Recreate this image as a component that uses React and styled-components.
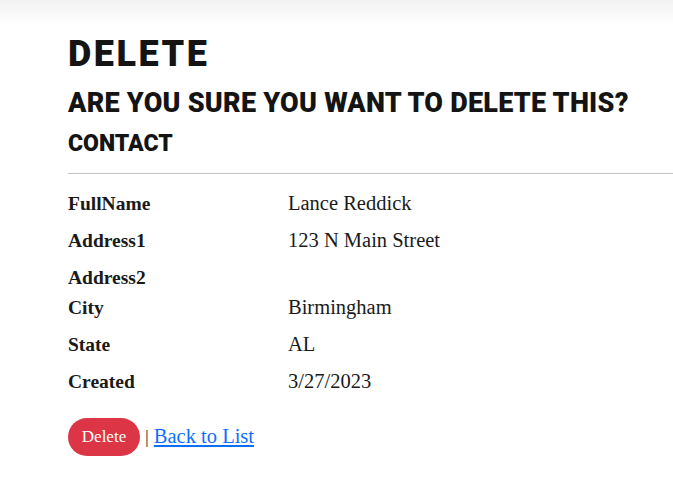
import React from 'react'
import styled, { createGlobalStyle } from 'styled-components'

const GlobalStyle = createGlobalStyle`
  html, body {
    margin: 0;
    padding: 0;
    background: #fff;
  }
  body {
    font-family: "Liberation Serif", "DejaVu Serif", serif;
    color: #212529;
  }
`

const TopShade = styled.div`
  height: 26px;
  background: linear-gradient(#f2f2f2, #ffffff);
`

const Main = styled.main`
  padding: 7px 0 0 68px;
`

const Title = styled.h1`
  margin: 0;
  font-family: Roboto, "DejaVu Sans", sans-serif;
  font-weight: 900;
  font-size: 36px;
  line-height: 43px;
  letter-spacing: 2.5px;
  text-transform: uppercase;
  color: #141414;
`

const Question = styled.h3`
  margin: 11px 0 0;
  font-family: Roboto, "DejaVu Sans", sans-serif;
  font-weight: 900;
  font-size: 27px;
  line-height: 32px;
  letter-spacing: 0.25px;
  text-transform: uppercase;
  color: #141414;
`

const Section = styled.h4`
  margin: 10px 0 0;
  font-family: Roboto, "DejaVu Sans", sans-serif;
  font-weight: 900;
  font-size: 23px;
  line-height: 30px;
  letter-spacing: 0;
  text-transform: uppercase;
  color: #141414;
`

const Rule = styled.hr`
  margin: 14px 0 15px;
  border: 0;
  border-top: 1px solid #c4c4c4;
`

const Details = styled.dl`
  display: grid;
  grid-template-columns: 220px 1fr;
  margin: 0;
  font-size: 20px;
  line-height: 29.5px;
  color: #1a1a1a;
`

const Label = styled.dt`
  font-weight: 700;
  font-size: 19.5px;
`

const Value = styled.dd`
  margin: 0 0 7.5px;
  font-size: 20.5px;
`

const Actions = styled.form`
  display: flex;
  align-items: center;
  margin-top: 14px;
  font-size: 20.5px;
`

const DangerButton = styled.button`
  width: 72px;
  height: 38px;
  border: 0;
  border-radius: 19px;
  background: #dc3545;
  color: #fff;
  font-family: "Liberation Serif", "DejaVu Serif", serif;
  font-size: 17px;
  padding: 0;
  cursor: pointer;
`

const Pipe = styled.span`
  margin: 0 5px 0 5px;
  color: #333;
  font-size: 19px;
`

const BackLink = styled.a`
  color: #0d6efd;
  text-decoration: underline;
  text-underline-offset: 2px;
`

const fields = [
  ['FullName', 'Lance Reddick'],
  ['Address1', '123 N Main Street'],
  ['Address2', ''],
  ['City', 'Birmingham'],
  ['State', 'AL'],
  ['Created', '3/27/2023'],
]

export default function App() {
  return (
    <>
      <GlobalStyle />
      <TopShade />
      <Main>
        <Title>Delete</Title>
        <Question>Are you sure you want to delete this?</Question>
        <Section>Contact</Section>
        <Rule />
        <Details>
          {fields.map(([label, value]) => (
            <React.Fragment key={label}>
              <Label>{label}</Label>
              <Value>{value}</Value>
            </React.Fragment>
          ))}
        </Details>
        <Actions onSubmit={e => e.preventDefault()}>
          <DangerButton type="submit">Delete</DangerButton>
          <Pipe>|</Pipe>
          <BackLink href="#">Back to List</BackLink>
        </Actions>
      </Main>
    </>
  )
}
